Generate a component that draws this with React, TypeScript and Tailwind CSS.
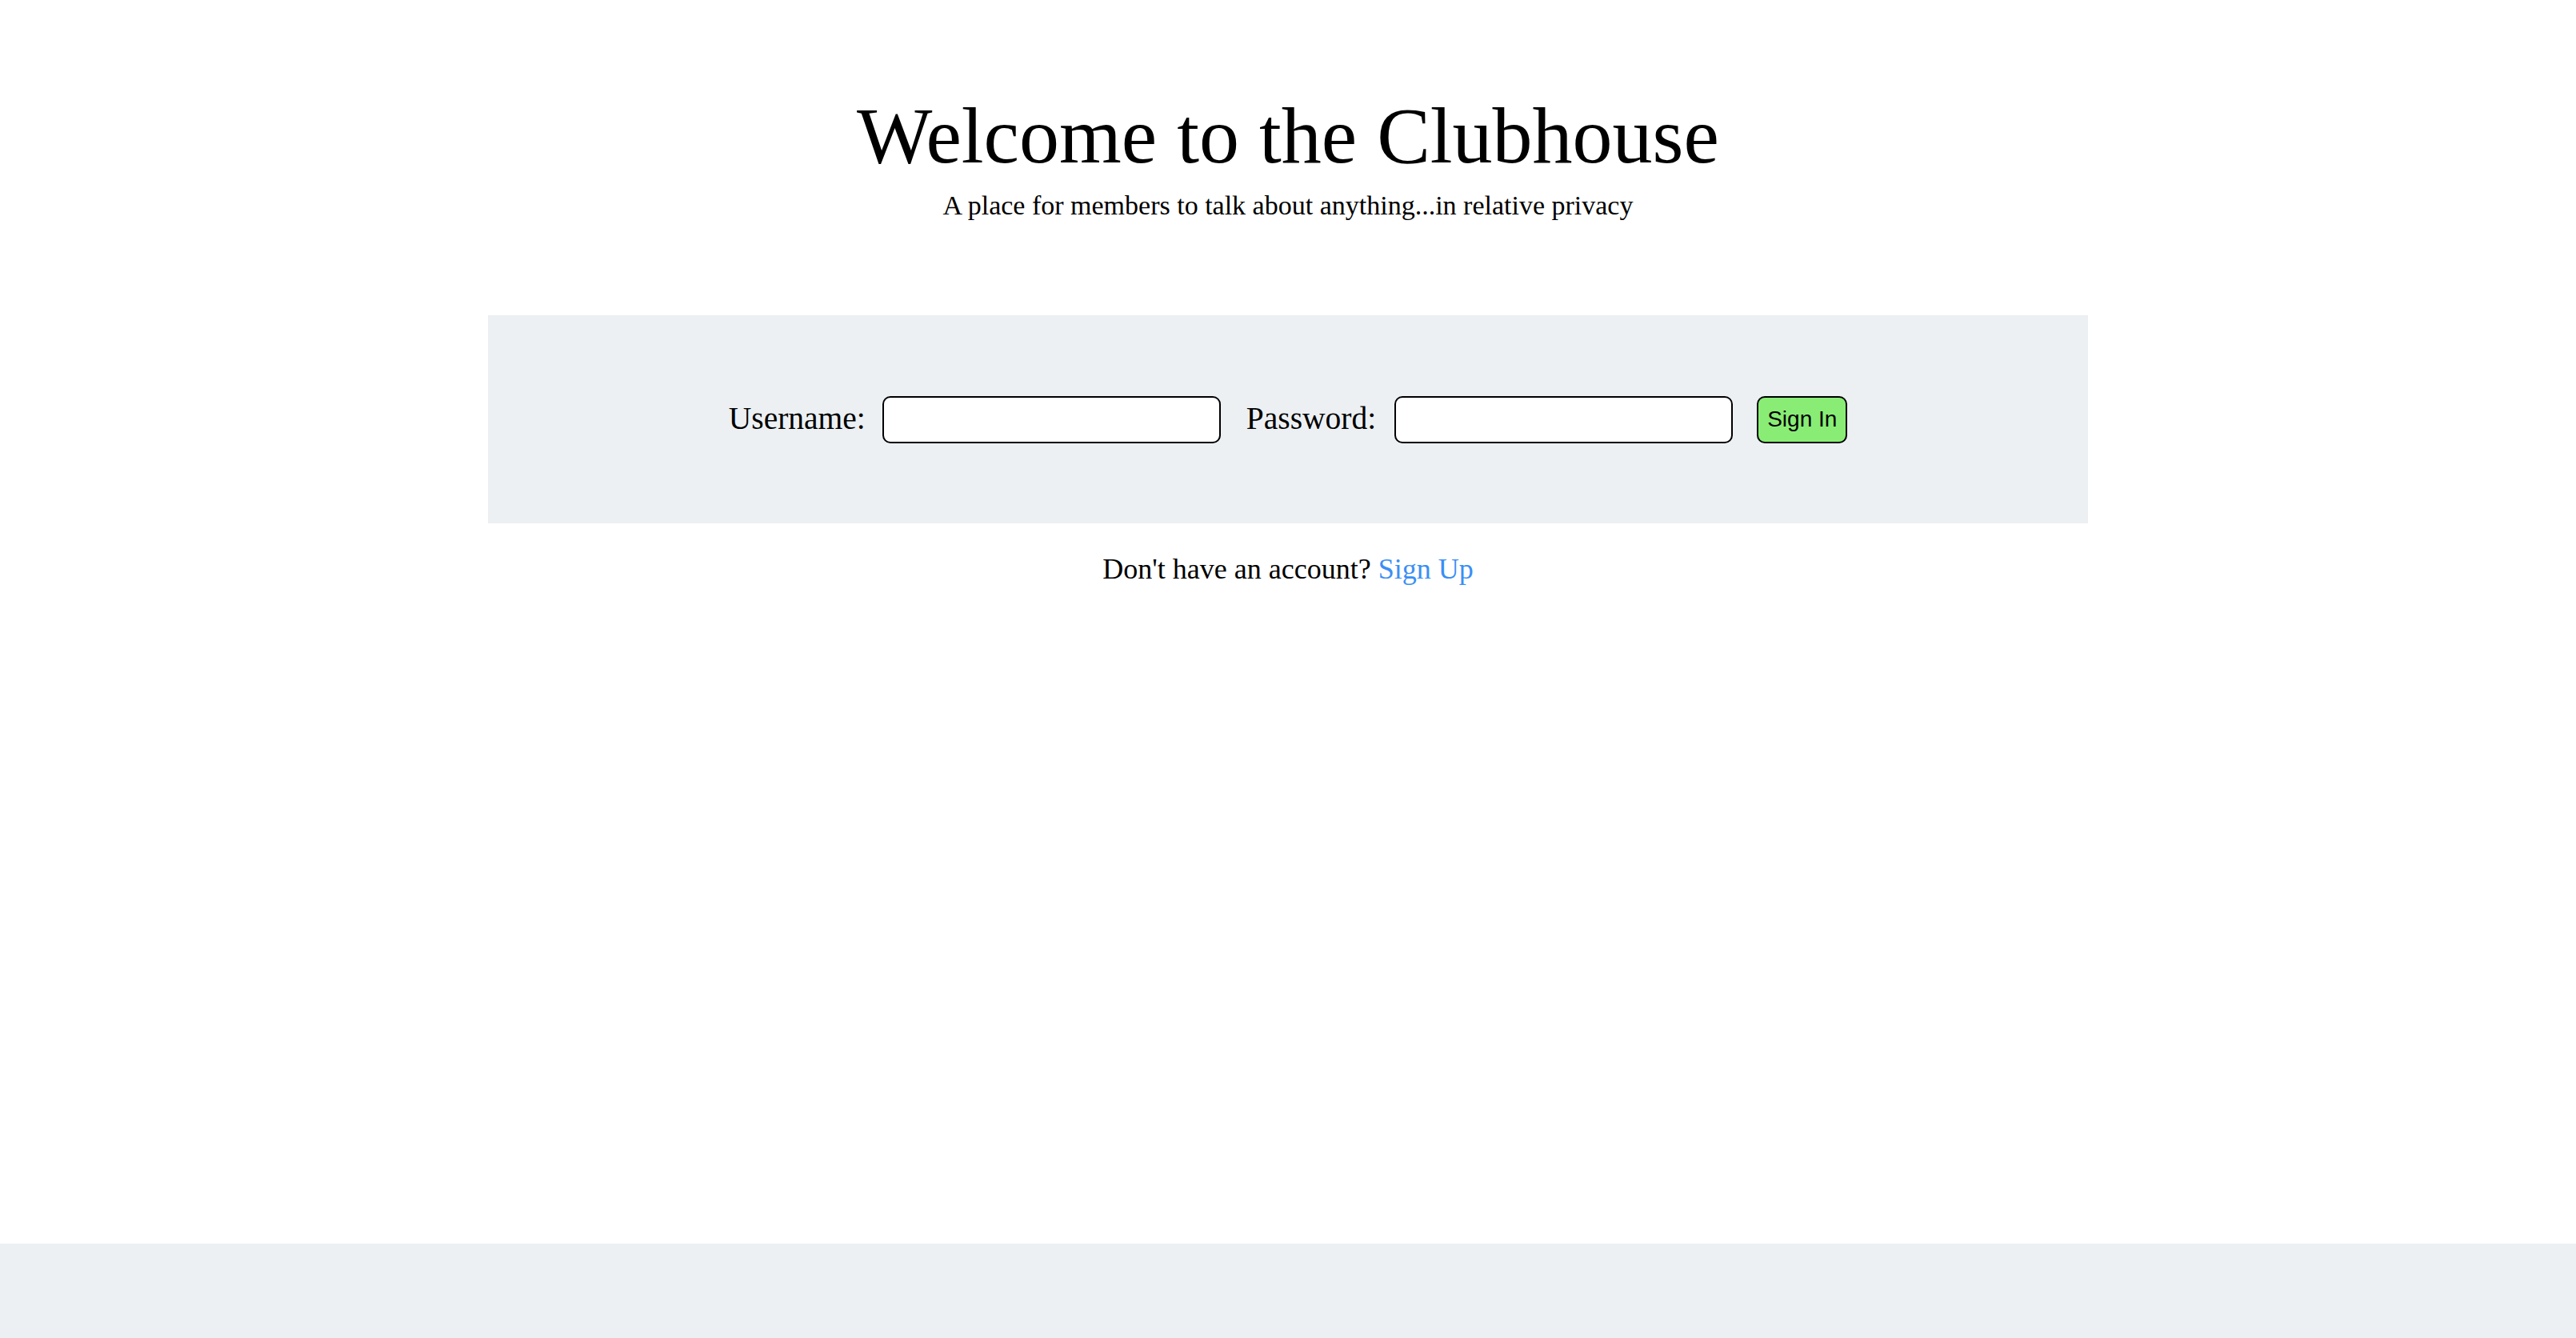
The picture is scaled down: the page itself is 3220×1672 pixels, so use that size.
import { useState } from "react";

export default function App() {
  const [username, setUsername] = useState("");
  const [password, setPassword] = useState("");

  return (
    <div className="min-h-screen flex flex-col bg-white text-black font-['Liberation_Serif',serif]">
      {/* Cabeçalho */}
      <header className="flex flex-col items-center pt-[120px]">
        <h1 className="text-[100px] leading-none font-normal">Welcome to the Clubhouse</h1>
        <p className="mt-[20px] text-[34px] leading-none">
          A place for members to talk about anything...in relative privacy
        </p>
      </header>

      <main className="flex flex-col items-center">
        {/* Formulário de login */}
        <form
          onSubmit={(e) => e.preventDefault()}
          className="mt-[120px] w-[2000px] h-[260px] bg-[#ecf0f3] flex items-center justify-center"
        >
          <label htmlFor="username" className="text-[39.5px] leading-none mr-[21px]">
            Username:
          </label>
          <input
            id="username"
            type="text"
            value={username}
            onChange={(e) => setUsername(e.target.value)}
            className="w-[423px] h-[59px] bg-white border-2 border-black rounded-[10px] px-3 text-[28px] outline-none"
          />
          <label htmlFor="password" className="ml-[32px] text-[39.5px] leading-none mr-[23px]">
            Password:
          </label>
          <input
            id="password"
            type="password"
            value={password}
            onChange={(e) => setPassword(e.target.value)}
            className="w-[423px] h-[59px] bg-white border-2 border-black rounded-[10px] px-3 text-[28px] outline-none"
          />
          <button
            type="submit"
            className="ml-[30px] w-[113px] h-[59px] bg-[#89ed75] border-2 border-black rounded-[10px] font-['Liberation_Sans',sans-serif] text-[28px] leading-none"
          >
            Sign In
          </button>
        </form>

        <p className="mt-[39px] text-[36px] leading-none">
          Don't have an account?{" "}
          <a href="#" className="text-[#3a8ff5]">
            Sign Up
          </a>
        </p>
      </main>

      <footer className="mt-auto h-[118px] bg-[#ecf0f3]" />
    </div>
  );
}
